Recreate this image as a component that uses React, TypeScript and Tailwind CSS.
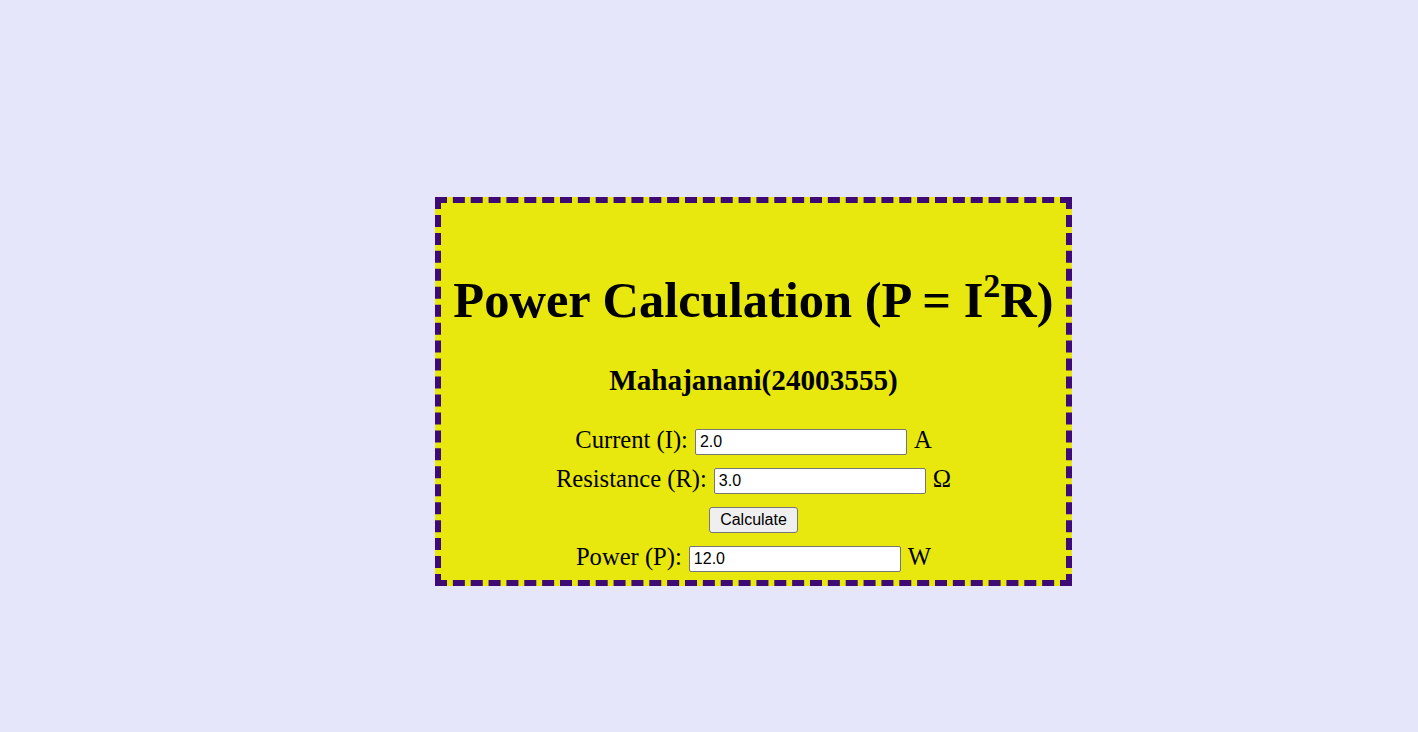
import React from "react";

export default function App() {
  const serif = { fontFamily: '"Liberation Serif", "Times New Roman", serif' } as React.CSSProperties;
  return (
    <div className="min-h-[732px] w-full bg-[#e6e6fa] pt-[197px] pl-[435px]" style={serif}>
      <div className="w-[637px] border-[6px] border-dashed border-[#3d0a78] bg-[#e8e80e] pt-[68px] pb-[8px] text-black font-['Liberation_Serif',serif]">
        <h1 className="text-center text-[50.5px] leading-[58px] font-bold whitespace-nowrap">
          Power Calculation (P = I<sup className="text-[34px] top-[-20px]">2</sup>R)
        </h1>
        <h2 className="mt-[35px] text-center text-[29.2px] leading-[32px] font-bold">
          Mahajanani(24003555)
        </h2>
        <div className="mt-[28px] flex flex-col items-center gap-[8px]">
          <Row label="Current (I):" value="2.0" unit="A" />
          <Row label="Resistance (R):" value="3.0" unit="Ω" />
          <div className="h-[31px] pt-[5px]">
            <button
              type="button"
              className="h-[26px] px-[10px] bg-[#efefef] border border-[#767676] rounded-[3px] text-[16px] leading-[18px] text-black font-['Liberation_Sans',Arial,sans-serif]"
            >
              Calculate
            </button>
          </div>
          <Row label="Power (P):" value="12.0" unit="W" />
        </div>
      </div>
    </div>
  );
}

function Row({ label, value, unit }: { label: string; value: string; unit: string }) {
  return (
    <div className="flex items-start justify-center gap-[7px] h-[31px]">
      <span className="pt-[2px] text-[24.6px] leading-[27px] whitespace-nowrap">{label}</span>
      <input
        type="text"
        defaultValue={value}
        className="mt-[5px] h-[26px] w-[212px] pl-[4px] pr-[2px] pb-[0px] bg-white border border-[#767676] rounded-[2px] text-[16px] text-black font-['Liberation_Sans',Arial,sans-serif] outline-none"
      />
      <span className="pt-[2px] text-[24.6px] leading-[27px]">{unit}</span>
    </div>
  );
}
